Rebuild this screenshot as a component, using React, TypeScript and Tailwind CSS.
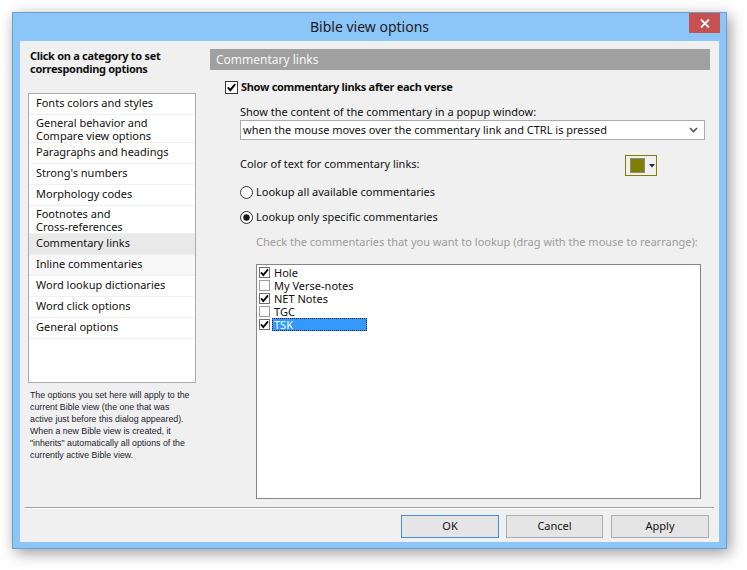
import React from "react";

const F = "font-['Noto_Sans',sans-serif]";

function CheckBox({ checked }: { checked: boolean }) {
  return (
    <svg width="13" height="13" viewBox="0 0 13 13" className="shrink-0">
      <rect x="0.5" y="0.5" width="12" height="12" fill="#fff" stroke="#333" />
      {checked && <path d="M2.8 6.4 L5.3 9.2 L10.2 3.2" fill="none" stroke="#000" strokeWidth="1.9" />}
    </svg>
  );
}

function SmallCheck({ checked }: { checked: boolean }) {
  return (
    <svg width="11" height="11" viewBox="0 0 11 11" className="shrink-0">
      <rect x="0.5" y="0.5" width="10" height="10" fill="#fff" stroke={checked ? "#6f6f6f" : "#9c9c9c"} />
      {checked && <path d="M2 5.4 L4.3 8 L9 2.4" fill="none" stroke="#000" strokeWidth="1.8" />}
    </svg>
  );
}

function Radio({ on }: { on: boolean }) {
  return (
    <svg width="13" height="13" viewBox="0 0 13 13" className="shrink-0">
      <circle cx="6.5" cy="6.5" r="6" fill="#fff" stroke="#333" />
      {on && <circle cx="6.5" cy="6.5" r="3.2" fill="#1a1a1a" />}
    </svg>
  );
}

const cats: { t: string[]; sel?: boolean; hov?: boolean }[] = [
  { t: ["Fonts colors and styles"] },
  { t: ["General behavior and", "Compare view options"] },
  { t: ["Paragraphs and headings"] },
  { t: ["Strong's numbers"] },
  { t: ["Morphology codes"] },
  { t: ["Footnotes and", "Cross-references"] },
  { t: ["Commentary links"], sel: true },
  { t: ["Inline commentaries"], hov: true },
  { t: ["Word lookup dictionaries"] },
  { t: ["Word click options"] },
  { t: ["General options"] },
];

const comms = [
  { n: "Hole", c: true },
  { n: "My Verse-notes", c: false },
  { n: "NET Notes", c: true },
  { n: "TGC", c: false },
  { n: "TSK", c: true, sel: true },
];

export default function App() {
  return (
    <div className={`w-[747px] h-[570px] bg-white overflow-hidden ${F} text-[11px] text-black`}>
      <div className="ml-[12px] mt-[12px] w-[715px] h-[537px] bg-[#8cc5f7] border border-[#6a9fd2] flex flex-col shadow-[3px_4px_14px_rgba(0,0,0,0.4)]">
        {/* title bar */}
        <div className="h-[28px] flex items-start">
          <div className="w-[37px]" />
          <div className="flex-1 h-[28px] flex items-center justify-center text-[14px] text-[#1c1c1c] leading-none">Bible view options</div>
          <div className="w-[31px] h-[20px] mr-[6px] bg-[#c75050] flex items-center justify-center">
            <svg width="10" height="9" viewBox="0 0 10 9">
              <path d="M1 0.5 L9 8.5 M9 0.5 L1 8.5" stroke="#fff" strokeWidth="1.8" />
            </svg>
          </div>
        </div>
        {/* client */}
        <div className="mx-[7px] w-[699px] h-[501px] bg-[#f0f0f0] flex flex-col">
          <div className="h-[466px] flex">
            {/* left column */}
            <div className="pl-[8px] w-[176px] flex flex-col">
              <div className="mt-[8px] pl-[2px] font-bold text-[11px] tracking-[-0.3px] leading-[13px] text-[#111]">
                Click on a category to set
                <br />
                corresponding options
              </div>
              <div className="mt-[18px] w-[168px] h-[290px] bg-white border border-[#ababab] flex flex-col">
                {cats.map((c, i) => (
                  <div
                    key={i}
                    className={`border-b border-[#f0f0f0] pl-[7px] leading-[13px] text-[#111] ${
                      c.t.length > 1 ? "h-[28px] pt-[1px]" : "h-[21px] pt-[2px]"
                    } ${c.sel ? "bg-[#e9e9e9]" : c.hov ? "bg-[#f8f8f8]" : ""}`}
                  >
                    {c.t.map((l, j) => (
                      <div key={j} className="whitespace-nowrap">{l}</div>
                    ))}
                  </div>
                ))}
              </div>
              <div className="mt-[6px] pl-[2px] font-['Liberation_Sans',sans-serif] text-[8.8px] leading-[12px] text-[#1c1c2c] whitespace-nowrap">
                The options you set here will apply to the
                <br />
                current Bible view (the one that was
                <br />
                active just before this dialog appeared).
                <br />
                When a new Bible view is created, it
                <br />
                "inherits" automatically all options of the
                <br />
                currently active Bible view.
              </div>
            </div>
            {/* right column */}
            <div className="ml-[14px] w-[500px] flex flex-col">
              <div className="mt-[8px] h-[21px] bg-[#a0a0a0] pl-[6px] flex items-center text-[12px] text-[#f6f6f6]">
                Commentary links
              </div>
              <div className="mt-[11px] ml-[15px] flex items-center gap-[3px] h-[13px]">
                <CheckBox checked />
                <span className="font-bold tracking-[-0.3px] text-[#111]">Show commentary links after each verse</span>
              </div>
              <div className="mt-[11px] ml-[30px] leading-[13px] text-[#111]">
                Show the content of the commentary in a popup window:
              </div>
              <div className="mt-[2px] ml-[30px] w-[465px] h-[20px] bg-white border border-[#acacac] flex items-center pl-[2px] pr-[6px]">
                <span className="flex-1 text-[#111]">when the mouse moves over the commentary link and CTRL is pressed</span>
                <svg width="9" height="6" viewBox="0 0 9 6">
                  <path d="M1 1 L4.5 4.5 L8 1" fill="none" stroke="#555" strokeWidth="1.6" />
                </svg>
              </div>
              <div className="mt-[15px] ml-[30px] flex items-center h-[21px]">
                <span className="w-[385px] text-[#111] -mt-[2px]">Color of text for commentary links:</span>
                <div className="w-[32px] h-[21px] border border-[#808000] flex items-center pl-[4px] gap-[4px]">
                  <div className="w-[15px] h-[15px] border border-[#8a8a8a] bg-[#808000]" />
                  <svg width="6" height="4" viewBox="0 0 6 4">
                    <path d="M0 0 L6 0 L3 3.5 Z" fill="#1e2a50" />
                  </svg>
                </div>
              </div>
              <div className="mt-[10px] ml-[30px] flex items-center gap-[3px] h-[13px]">
                <Radio on={false} />
                <span className="text-[#111]">Lookup all available commentaries</span>
              </div>
              <div className="mt-[12px] ml-[30px] flex items-center gap-[3px] h-[13px]">
                <Radio on />
                <span className="text-[#111]">Lookup only specific commentaries</span>
              </div>
              <div className="mt-[11px] ml-[46px] leading-[13px] text-[#9b9b9b] whitespace-nowrap">
                Check the commentaries that you want to lookup (drag with the mouse to rearrange):
              </div>
              <div className="mt-[16px] ml-[46px] w-[445px] h-[235px] bg-white border border-[#828790] pt-[1px] pl-[2px]">
                {comms.map((c) => (
                  <div key={c.n} className="h-[13px] flex items-center">
                    <SmallCheck checked={c.c} />
                    <span
                      className={`ml-[2px] leading-[12px] h-[13px] flex items-center ${
                        c.sel ? "bg-[#3399ff] text-white w-[95px] border border-dotted border-[#222] pl-[1px]" : "pl-[2px] text-[#111]"
                      }`}
                    >
                      {c.n}
                    </span>
                  </div>
                ))}
              </div>
            </div>
          </div>
          {/* separator */}
          <div className="mx-[5px] h-[2px] border-t border-[#a0a0a0] border-b border-b-white" />
          <div className="mt-[6px] flex justify-end pr-[10px]">
            <button className="w-[98px] h-[23px] bg-[#e5e5e5] border border-[#3c8ee6] text-[#111]">OK</button>
            <button className="ml-[7px] w-[97px] h-[23px] bg-[#e5e5e5] border border-[#adadad] text-[#111]">Cancel</button>
            <button className="ml-[8px] w-[98px] h-[23px] bg-[#e5e5e5] border border-[#adadad] text-[#111]">Apply</button>
          </div>
        </div>
      </div>
    </div>
  );
}
